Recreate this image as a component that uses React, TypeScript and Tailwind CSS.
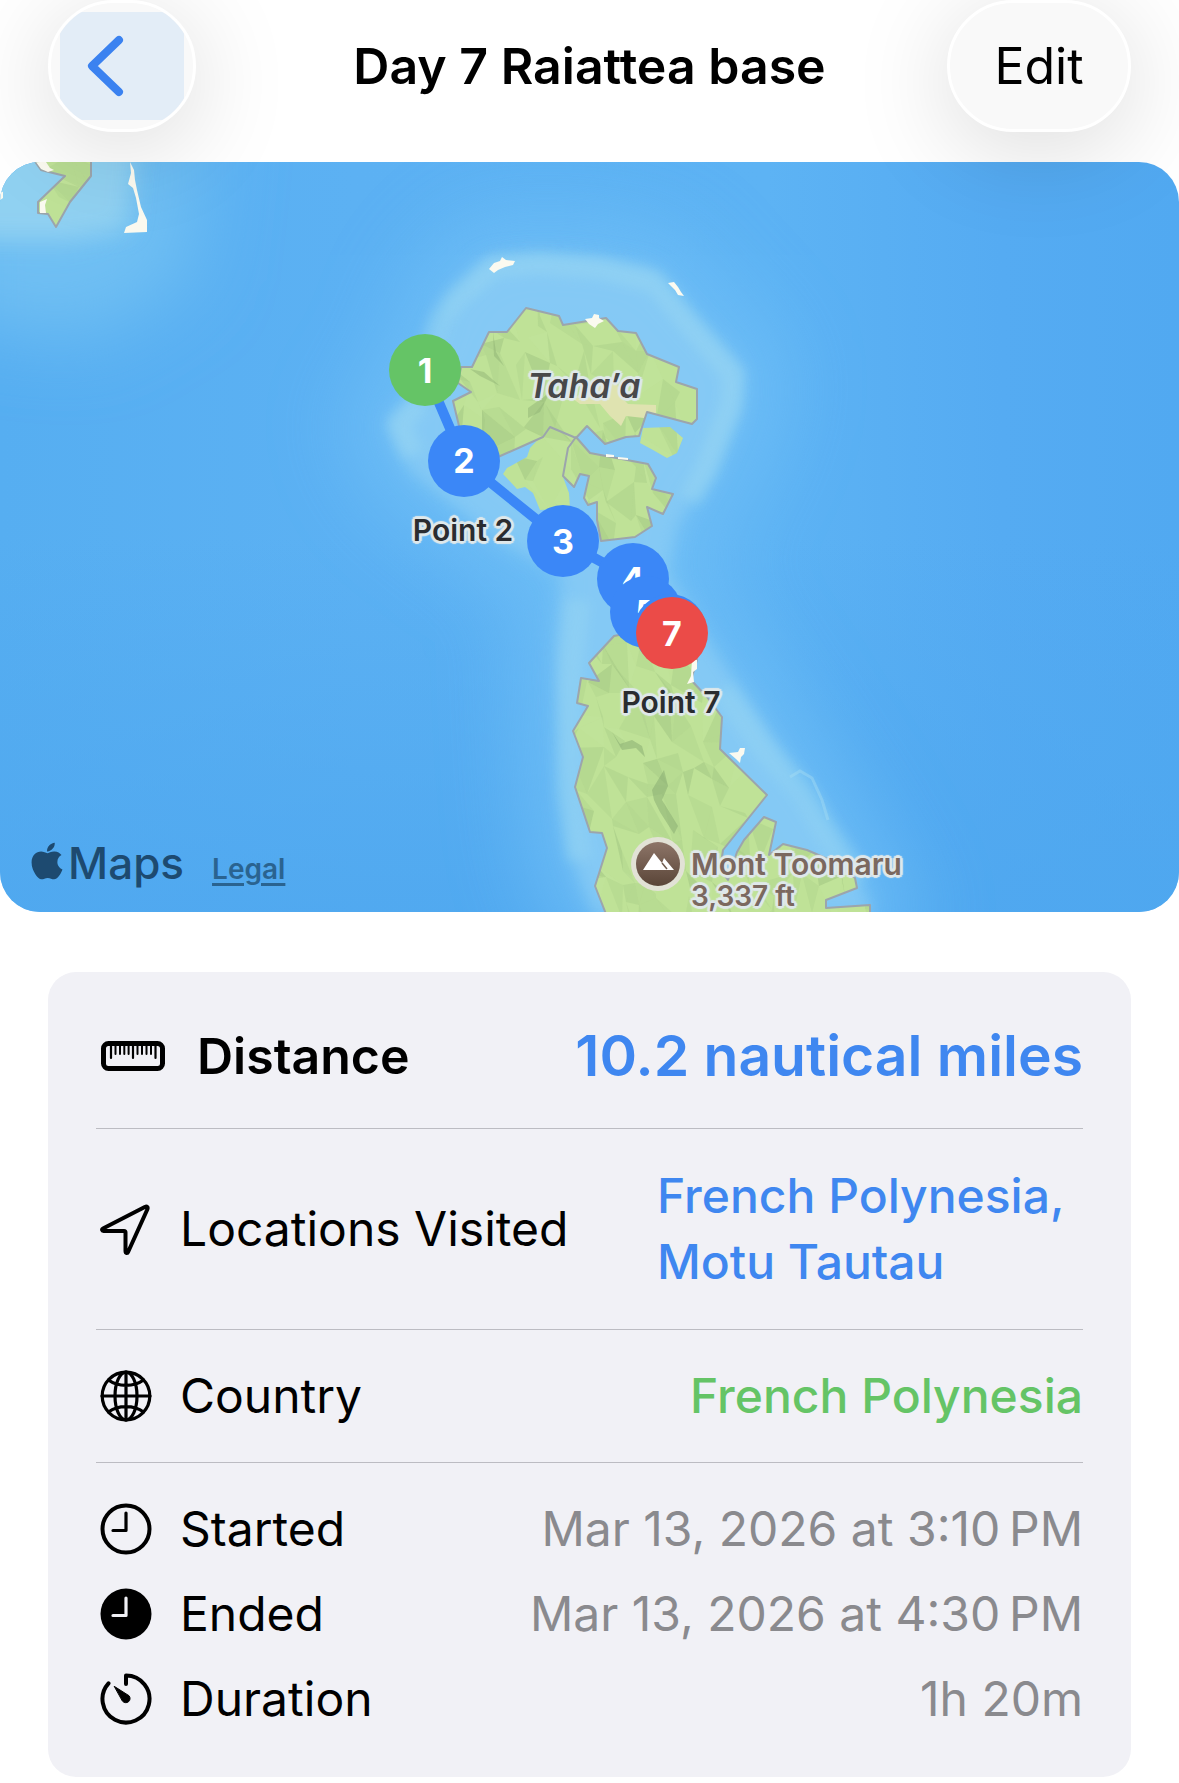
import React from "react";
import { FaApple } from "react-icons/fa";

// Map drawing space: x 0..1179, y 162..912
const MAP_W = 1179;
const MAP_H = 750;
const MAP_TOP = 162;

const left = (x: number) => `${(x / MAP_W) * 100}%`;
const top = (y: number) => `${((y - MAP_TOP) / MAP_H) * 100}%`;

const pins = [
  { id: 1, x: 425, y: 370, color: "bg-[#65c466]" },
  { id: 2, x: 464, y: 461, color: "bg-[#3b87f7]" },
  { id: 3, x: 563, y: 541, color: "bg-[#3b87f7]" },
  { id: 4, x: 633, y: 579, color: "bg-[#3b87f7]" },
  { id: 5, x: 646, y: 612, color: "bg-[#3b87f7]" },
  { id: 6, x: 670, y: 630, color: "bg-[#3b87f7]" },
  { id: 7, x: 672, y: 633, color: "bg-[#eb4b48]" },
];

const halo =
  "[text-shadow:3px_0_1px_#dfe8ea,-3px_0_1px_#dfe8ea,0_3px_1px_#dfe8ea,0_-3px_1px_#dfe8ea,2px_2px_1px_#dfe8ea,-2px_2px_1px_#dfe8ea,2px_-2px_1px_#dfe8ea,-2px_-2px_1px_#dfe8ea]";

const tahaa =
  "M461 367L472 367L489 332L507 332L526 308L559 316L563 325L606 318L618 331L636 333L647 354L679 367L676 382L697 389L697 419L692 424L647 412L639 436L626 437L605 444L587 426L576 438L550 427L543 437L498 457L460 430L453 401L471 392L458 383Z";
const tahaaWest =
  "M550 427L576 438L569 447L563 477L569 493L570 508L540 510L533 493L525 487L517 489L503 474L507 468L527 457L530 448Z";
const tahaaSouth =
  "M576 437L590 453L648 464L656 478L652 489L673 494L663 514L647 507L652 526L635 537L601 541L597 520L597 502L588 505L584 498L589 476L580 474L574 487L563 476L568 448Z";
const tahaaEast = "M643 428L670 427L683 438L677 453L667 458L653 450L640 443Z";
const raiatea =
  "M619 635L614 636L589 663L599 681L581 678L577 703L588 706L573 731L583 757L575 787L590 832L602 833L607 848L595 886L606 914L870 914L870 905L826 908L826 900L857 888L855 878L830 860L807 850L783 844L769 855L776 822L764 817L744 840L737 852L728 880L720 870L723 850L767 795L720 749L722 717L707 697L691 680L697 660L680 630Z";
const huahine =
  "M34 160L41 170L65 176L38 202L38 213L48 214L56 227L70 202L91 176L91 160Z";

const land = [tahaa, tahaaWest, tahaaSouth, tahaaEast, raiatea, huahine];
const coast = [tahaa, tahaaSouth, raiatea, huahine];

const lagoon =
  "M410 470L387 423L415 395L440 330L447 303L487 260L540 256L597 260L653 270L690 313L743 370L740 407L713 473L677 523L667 573L717 657L750 705L790 770L830 830L875 914L594 914L570 850L562 760L557 650L563 573L500 540Z";

const noise = (a: number, b: number) => {
  const v = Math.sin(a * 127.1 + b * 311.7) * 43758.5453;
  return v - Math.floor(v);
};

// Low-poly hill shading, clipped to the land shapes
const buildFacets = () => {
  const cellX = 17;
  const cellY = 26;
  const facets: { d: string; fill: string; opacity: number }[] = [];
  const pt = (c: number, r: number) => [
    Math.round(c * cellX + (noise(c, r) - 0.5) * 22),
    Math.round(r * cellY + (noise(r + 40, c) - 0.5) * 30),
  ];
  for (let r = 6; r < 36; r++) {
    for (let c = 1; c < 53; c++) {
      const a = pt(c, r);
      const b = pt(c + 1, r);
      const d = pt(c + 1, r + 1);
      const e = pt(c, r + 1);
      [
        [a, b, d],
        [a, d, e],
      ].forEach((tri, i) => {
        const n = noise(c * 2 + i, r + 9);
        if (n > 0.5) {
          facets.push({
            d: `M${tri.map((p) => p.join(" ")).join("L")}Z`,
            fill: n > 0.6 ? "#7fa56a" : "#d2edb0",
            opacity: n > 0.95 ? 0.24 : n > 0.8 ? 0.15 : 0.1,
          });
        }
      });
    }
  }
  return facets;
};

const facets = buildFacets();

const MapArt = () => (
  <svg
    viewBox={`0 ${MAP_TOP} ${MAP_W} ${MAP_H}`}
    className="block h-full w-full"
    aria-hidden="true"
  >
    <defs>
      <linearGradient id="ocean" x1="0" y1="0" x2="1" y2="0">
        <stop offset="0" stopColor="#56aef1" />
        <stop offset="0.3" stopColor="#5cb1f3" />
        <stop offset="0.65" stopColor="#5db3f4" />
        <stop offset="0.85" stopColor="#55abf2" />
        <stop offset="1" stopColor="#51a9f1" />
      </linearGradient>
      <linearGradient id="deep" x1="0" y1="0" x2="0" y2="1">
        <stop offset="0.5" stopColor="#4ea7ef" stopOpacity="0" />
        <stop offset="1" stopColor="#4ea7ef" stopOpacity="0.8" />
      </linearGradient>
      <linearGradient id="peak" x1="0" y1="0" x2="0" y2="1">
        <stop offset="0" stopColor="#8d7568" />
        <stop offset="1" stopColor="#5a4538" />
      </linearGradient>
      <filter id="soft" x="-40%" y="-40%" width="180%" height="180%">
        <feGaussianBlur stdDeviation="38" />
      </filter>
      <filter id="mid" x="-30%" y="-30%" width="160%" height="160%">
        <feGaussianBlur stdDeviation="12" />
      </filter>
      <filter id="fine" x="-30%" y="-30%" width="160%" height="160%">
        <feGaussianBlur stdDeviation="6" />
      </filter>
      <clipPath id="land">
        {land.map((d) => (
          <path key={d} d={d} />
        ))}
      </clipPath>
    </defs>

    <rect x="0" y="162" width="1179" height="750" fill="url(#ocean)" />
    <rect x="0" y="162" width="1179" height="750" fill="url(#deep)" />

    {/* Shallow water */}
    <path
      d={lagoon}
      fill="#71c0f6"
      stroke="#71c0f6"
      strokeWidth="90"
      strokeLinejoin="round"
      opacity="0.75"
      filter="url(#soft)"
    />
    <path d="M-60 100L210 100L190 280L90 340L-60 320Z" fill="#6fbff3" filter="url(#soft)" />
    <path d="M-60 100L140 100L128 230L70 240L-60 240Z" fill="#94d3f1" opacity="0.9" filter="url(#mid)" />
    <path d={lagoon} fill="#85caf5" opacity="0.8" filter="url(#mid)" />
    <path d={lagoon} fill="#8dcef5" opacity="0.4" filter="url(#fine)" />
    <path
      d="M430 350L440 320L456 298L494 266L540 263L600 268L655 282L690 325L733 375L731 405L706 470L690 500M413 455L399 424L420 402"
      fill="none"
      stroke="#a0dbf1"
      strokeWidth="22"
      strokeLinejoin="round"
      opacity="0.4"
      filter="url(#fine)"
    />
    <path
      d="M578 600L570 680L568 790L580 860M722 690L765 750L802 790L825 830L860 880"
      fill="none"
      stroke="#9ad8f2"
      strokeWidth="24"
      opacity="0.4"
      filter="url(#fine)"
    />
    <path
      d="M790 777L800 771L812 778L822 800L828 820"
      fill="none"
      stroke="#a9dff2"
      strokeWidth="3"
      opacity="0.4"
    />

    {land.map((d) => (
      <path key={d} d={d} fill="#bfe297" />
    ))}
    <g clipPath="url(#land)">
      {facets.map((f, i) => (
        <path key={i} d={f.d} fill={f.fill} opacity={f.opacity} />
      ))}
      <path
        d="M572 398L592 390L600 378L616 378L620 396L628 404L656 405L656 413L644 418L626 416L621 426L610 416L600 404L580 404Z"
        fill="#dfe3b0"
      />
      <path
        d="M612 732L620 744L632 740L642 746L645 757L636 748L622 750ZM652 790L664 770L668 786L662 800L678 826L674 834L660 812L654 800Z"
        fill="#86a96f"
        opacity="0.5"
      />
      <path
        d="M470 369L484 372L500 386L480 376ZM528 408L545 396L556 380L540 412L528 418ZM493 332L496 352L504 366L494 356Z"
        fill="#86a96f"
        opacity="0.4"
      />
    </g>
    {coast.map((d) => (
      <path key={d} d={d} fill="none" stroke="#9ca5ac" strokeWidth="2" strokeLinejoin="round" />
    ))}

    {/* Sand and reef */}
    <g fill="#fbfaf0">
      <path d="M489 269L494 263L500 261L502 257L506 260L515 261L513 265L505 267L498 270L494 273Z" />
      <path d="M668 283L674 282L678 287L681 292L684 296L678 295L675 290Z" />
      <path d="M585 319L592 318L594 314L599 315L599 318L604 321L598 324L595 328L589 324Z" />
      <path d="M606 454L614 455L614 457L606 457ZM618 457L628 458L628 460L618 459Z" />
      <path d="M729 753L738 752L740 748L745 748L744 754L741 757L740 763L736 759Z" />
      <path d="M692 660L697 660L697 669L693 672L694 682L687 684L691 676Z" />
      <path d="M130 162L134 170L135 180L137 190L141 207L147 220L147 232L124 233L126 227L137 222L139 214L136 198L133 188L128 184L131 173Z" />
      <path d="M36 162L46 162L50 168L54 170L48 172L41 169ZM40 202L47 199L45 205L46 213L40 213Z" />
      <path d="M0 191L3 192L3 198L0 200Z" />
    </g>

    <polyline
      points={pins.map((p) => `${p.x},${p.y}`).join(" ")}
      fill="none"
      stroke="#3b87f7"
      strokeWidth="10"
      strokeLinejoin="round"
    />

    <circle cx="658" cy="864" r="27" fill="#e2e2d6" />
    <circle cx="658" cy="864" r="22" fill="url(#peak)" />
    <path d="M643 870L654 853L662 863L664 858L674 870Z" fill="#fff" />
    <path d="M662 863L667 869" stroke="#6f5a4d" strokeWidth="1.5" />
  </svg>
);

const iconProps = {
  fill: "none",
  stroke: "currentColor",
  strokeLinecap: "round" as const,
  strokeLinejoin: "round" as const,
  "aria-hidden": true,
};

const RulerIcon = () => (
  <svg {...iconProps} viewBox="0 0 64 30" className="h-[30px] w-[64px]">
    <rect x="2.5" y="2.5" width="59" height="25" rx="5" strokeWidth="5" />
    <path d="M10 4v13M32 4v13M54.5 4v13" strokeWidth="2.2" />
    <path d="M14.5 4v9M19 4v9M23.3 4v9M27.6 4v9M36.5 4v9M41 4v9M45.5 4v9M50 4v9" strokeWidth="2" />
  </svg>
);

const ArrowIcon = () => (
  <svg {...iconProps} viewBox="0 0 52 52" className="size-[52px]">
    <path
      d="M3 25.5C1.5 26.3 2 28 3.5 28H24C25 28 25.5 28.5 25.5 29.5V48C25.5 50.5 27.5 50.5 28.2 48.7L47.3 6.5C48.3 4 47 3 44.8 4Z"
      strokeWidth="4"
    />
  </svg>
);

const GlobeIcon = () => (
  <svg {...iconProps} viewBox="0 0 52 52" className="size-[52px]">
    <g strokeWidth="3.2">
      <circle cx="26" cy="26" r="23.8" />
      <ellipse cx="26" cy="26" rx="11" ry="23.8" />
      <path d="M26 2V50M2 26H50M8.5 10C18 17.2 34 17.2 43.5 10M8.5 42C18 34.8 34 34.8 43.5 42" />
    </g>
  </svg>
);

const ClockIcon = () => (
  <svg {...iconProps} viewBox="0 0 52 52" className="size-[52px]">
    <circle cx="26" cy="26" r="23.5" strokeWidth="4" />
    <path d="M26 10V27.5H13" strokeWidth="3.2" />
  </svg>
);

const ClockFilledIcon = () => (
  <svg {...iconProps} viewBox="0 0 52 52" className="size-[52px]">
    <circle cx="26" cy="26" r="25.5" fill="currentColor" stroke="none" />
    <path d="M26 10V27.5H13" stroke="#f1f1f6" strokeWidth="3.2" />
  </svg>
);

const TimerIcon = () => (
  <svg {...iconProps} viewBox="0 0 52 52" className="size-[52px]">
    <path d="M26 11V2.5A23.5 23.5 0 1 1 8.5 10.3" strokeWidth="4" />
    <path
      d="M14.5 13.5L29 22.7A4.2 4.2 0 1 1 22.6 28.3Z"
      fill="currentColor"
      strokeWidth="1"
    />
  </svg>
);

const times = [
  { label: "Started", value: "Mar 13, 2026 at 3:10\u202fPM", icon: <ClockIcon /> },
  { label: "Ended", value: "Mar 13, 2026 at 4:30\u202fPM", icon: <ClockFilledIcon /> },
  { label: "Duration", value: "1h 20m", icon: <TimerIcon /> },
];

interface RowLabelProps {
  icon: React.ReactNode;
  children: React.ReactNode;
}

const RowLabel = ({ icon, children }: RowLabelProps) => (
  <dt className="flex shrink-0 items-center gap-7 pl-1">
    {icon}
    {children}
  </dt>
);

const Header = () => (
  <header className="relative z-10 grid h-[132px] grid-cols-[1fr_auto_1fr] items-center px-12">
    <button
      type="button"
      aria-label="Back"
      className="flex h-[132px] w-[148px] items-center overflow-hidden rounded-full border-3 border-white bg-[#f9f9f9] py-[9px] pl-[9px] shadow-[0_16px_100px_rgba(0,0,0,0.15)]"
    >
      <span className="flex h-[108px] w-[124px] items-center bg-[#e3edf7] pl-6">
        <svg viewBox="0 0 44 68" className="h-[68px] w-[44px]" aria-hidden="true">
          <path
            d="M35 8L8 34L35 60"
            fill="none"
            stroke="#3b82f0"
            strokeWidth="8"
            strokeLinecap="round"
            strokeLinejoin="round"
          />
        </svg>
      </span>
    </button>
    <h1 className="text-[50px] font-semibold">Day 7 Raiattea base</h1>
    <button
      type="button"
      className="h-[132px] w-[184px] justify-self-end rounded-full border-3 border-white bg-[#f9f9f9] text-[50px] shadow-[0_16px_100px_rgba(0,0,0,0.15)]"
    >
      Edit
    </button>
  </header>
);

const RouteMap = () => (
  <section
    aria-label="Route map"
    className="relative mt-[30px] aspect-[1179/750] w-full overflow-hidden rounded-[40px]"
  >
    <MapArt />

    {pins.map((pin) => (
      <div
        key={pin.id}
        className={`absolute flex size-[72px] -translate-x-1/2 -translate-y-1/2 items-center justify-center rounded-full text-[34px] font-bold text-white ${pin.color}`}
        style={{ left: left(pin.x), top: top(pin.y) }}
      >
        {pin.id}
      </div>
    ))}

    <span
      className={`absolute -translate-x-1/2 -translate-y-1/2 text-[30px] font-semibold whitespace-nowrap text-[#2a2c30] ${halo}`}
      style={{ left: left(463), top: top(530) }}
    >
      Point 2
    </span>
    <span
      className={`absolute -translate-x-1/2 -translate-y-1/2 text-[30px] font-semibold whitespace-nowrap text-[#2a2c30] ${halo}`}
      style={{ left: left(671), top: top(702) }}
    >
      Point 7
    </span>
    <span
      className={`absolute -translate-x-1/2 -translate-y-1/2 text-[34px] font-semibold text-[#48484a] italic ${halo}`}
      style={{ left: left(584), top: top(385) }}
    >
      Taha′a
    </span>
    <div
      className={`absolute text-[30px] leading-[32px] font-semibold whitespace-nowrap text-[#7b685f] ${halo}`}
      style={{ left: left(691), top: top(848) }}
    >
      <div>Mont Toomaru</div>
      <div className="text-[28px]">3,337 ft</div>
    </div>

    <div className="absolute bottom-4 left-[26px] flex items-baseline text-[#1d4a70]">
      <FaApple className="mb-1 size-[42px] self-center" aria-hidden="true" />
      <span className="text-[44px] font-medium">Maps</span>
      <a
        href="#legal"
        className="ml-7 text-[28px] font-semibold text-[#2a6390] underline decoration-3 underline-offset-4"
      >
        Legal
      </a>
    </div>
  </section>
);

const App = () => {
  return (
    <main className="min-h-screen bg-white pb-1 font-['Inter',sans-serif] text-black">
      <Header />
      <RouteMap />

      <dl className="mx-12 mt-[60px] rounded-[28px] bg-[#f1f1f6] px-12 pt-12 pb-12 text-[48px] leading-[66px]">
        <div className="flex items-center justify-between pb-9">
          <dt className="flex shrink-0 items-center gap-8 pl-[5px] text-[50px] font-semibold">
            <RulerIcon />
            Distance
          </dt>
          <dd className="text-[57px] leading-[72px] font-semibold text-[#3f87f0]">
            10.2 nautical miles
          </dd>
        </div>

        <div className="flex items-center justify-between border-t border-[#bcbcc2] py-[34px]">
          <RowLabel icon={<ArrowIcon />}>Locations Visited</RowLabel>
          <dd className="w-[426px] font-medium text-[#3f87f0]">
            French Polynesia, Motu Tautau
          </dd>
        </div>

        <div className="flex items-center justify-between border-t border-[#bcbcc2] py-[33px]">
          <RowLabel icon={<GlobeIcon />}>Country</RowLabel>
          <dd className="font-medium text-[#65c466]">French Polynesia</dd>
        </div>

        <div className="flex flex-col gap-[25px] border-t border-[#bcbcc2] pt-9 leading-[60px]">
          {times.map((row) => (
            <div key={row.label} className="flex items-center justify-between">
              <RowLabel icon={row.icon}>{row.label}</RowLabel>
              <dd className="text-[#8a8a8e]">{row.value}</dd>
            </div>
          ))}
        </div>
      </dl>
    </main>
  );
};

export default App;
